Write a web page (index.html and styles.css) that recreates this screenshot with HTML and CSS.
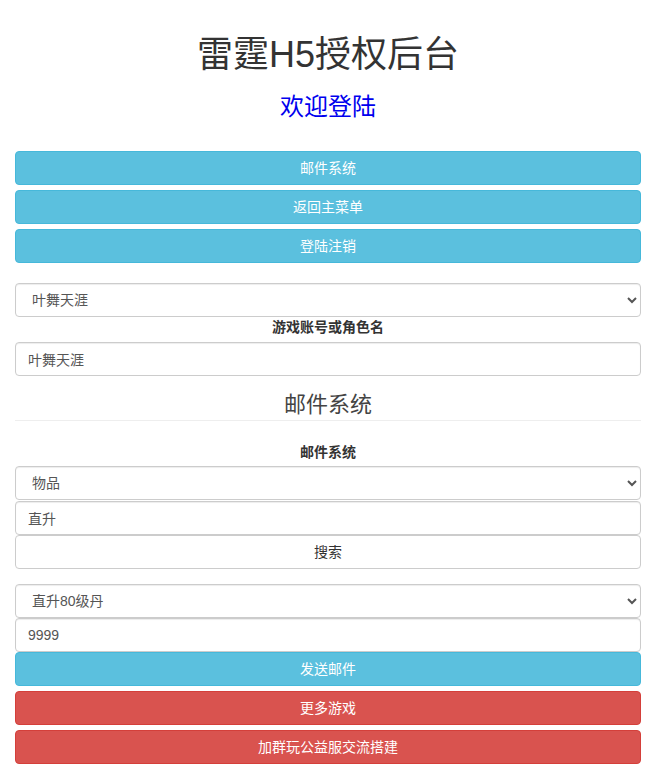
FILE: index.html
```html
<!DOCTYPE html>
<html lang="zh-CN">
<head>
    <meta charset="UTF-8">
    <meta name="viewport" content="width=device-width, initial-scale=1.0">
    <title>雷霆H5授权后台</title>
    <link rel="stylesheet" href="styles.css">
</head>
<body>
    <div class="container">
        <h1 class="title">雷霆H5授权后台</h1>
        <h2 class="welcome">欢迎登陆</h2>

        <div class="menu">
            <button class="btn btn-info">邮件系统</button>
            <button class="btn btn-info">返回主菜单</button>
            <button class="btn btn-info">登陆注销</button>
        </div>

        <div class="account">
            <select class="form-control">
                <option>叶舞天涯</option>
            </select>
            <label class="label">游戏账号或角色名</label>
            <input type="text" class="form-control" value="叶舞天涯">
        </div>

        <h3 class="section">邮件系统</h3>

        <div class="mail">
            <label class="label label-mail">邮件系统</label>
            <select class="form-control first">
                <option>物品</option>
            </select>
            <input type="text" class="form-control" value="直升">
            <button class="btn btn-default">搜索</button>
        </div>

        <div class="send">
            <select class="form-control">
                <option>直升80级丹</option>
            </select>
            <input type="text" class="form-control" value="9999">
            <button class="btn btn-info">发送邮件</button>
            <button class="btn btn-danger">更多游戏</button>
            <button class="btn btn-danger">加群玩公益服交流搭建</button>
        </div>
    </div>
</body>
</html>
```

FILE: styles.css
```css
body {
    margin: 0;
    font-family: "Liberation Sans", "Noto Sans CJK SC", sans-serif;
    font-size: 14px;
    line-height: 20px;
    color: #333;
    background-color: #fff;
}
.container {
    padding: 0 7px 0 15px;
}
.title {
    margin: 33px 0 0;
    font-size: 36px;
    line-height: 44px;
    font-weight: normal;
    text-align: center;
}
.welcome {
    margin: 15px 0 0;
    font-size: 24px;
    line-height: 30px;
    font-weight: normal;
    color: #0000ee;
    text-align: center;
}
.menu {
    margin-top: 29px;
    display: flex;
    flex-direction: column;
    gap: 5px;
}
.btn {
    display: block;
    width: 100%;
    height: 34px;
    margin: 0;
    padding: 6px 12px;
    font-family: inherit;
    font-size: 14px;
    line-height: 20px;
    text-align: center;
    border: 1px solid transparent;
    border-radius: 4px;
    cursor: pointer;
}
.btn-info {
    color: #fff;
    background-color: #5bc0de;
    border-color: #46b8da;
}
.btn-danger {
    color: #fff;
    background-color: #d9534f;
    border-color: #d43f3a;
}
.btn-default {
    color: #333;
    background-color: #fff;
    border-color: #ccc;
}
.form-control {
    display: block;
    width: 100%;
    height: 34px;
    margin: 0;
    padding: 6px 12px;
    box-sizing: border-box;
    font-family: inherit;
    font-size: 14px;
    line-height: 20px;
    color: #555;
    background-color: #fff;
    border: 1px solid #ccc;
    border-radius: 4px;
    box-shadow: inset 0 1px 1px rgba(0,0,0,.075);
}
.account {
    margin-top: 20px;
}
.label {
    display: block;
    font-weight: bold;
    text-align: center;
    margin-bottom: 5px;
}
.section {
    margin: 14px 0 0;
    font-size: 22px;
    line-height: 30px;
    font-weight: normal;
    color: #444;
    text-align: center;
    border-bottom: 1px solid #eee;
}
.mail {
    margin-top: 21px;
    display: flex;
    flex-direction: column;
}
.label-mail {
    margin-bottom: 4px;
}
.mail .first {
    margin-bottom: 1px;
}
.send {
    margin-top: 15px;
    display: flex;
    flex-direction: column;
}
.send .btn-danger {
    margin-top: 5px;
}
```
